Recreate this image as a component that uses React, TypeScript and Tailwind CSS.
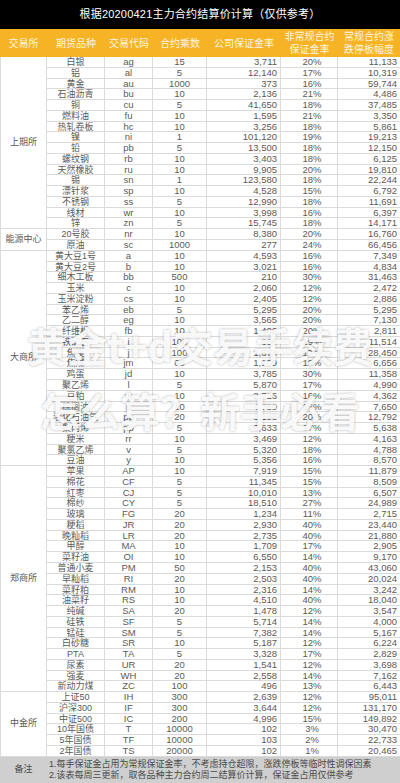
type Row = [string, string, string, string, string, string]

type Group = { name: string; rows: Row[] }

const groups: Group[] = [
  {
    name: "上期所",
    rows: [
      ["白银", "ag", "15", "3,711", "20%", "11,133"],
      ["铝", "al", "5", "12,140", "17%", "10,319"],
      ["黄金", "au", "1000", "373", "16%", "59,744"],
      ["石油沥青", "bu", "10", "2,136", "21%", "4,486"],
      ["铜", "cu", "5", "41,650", "18%", "37,485"],
      ["燃料油", "fu", "10", "1,595", "21%", "3,350"],
      ["热轧卷板", "hc", "10", "3,256", "18%", "5,861"],
      ["镍", "ni", "1", "101,120", "19%", "19,213"],
      ["铅", "pb", "5", "13,500", "18%", "12,150"],
      ["螺纹钢", "rb", "10", "3,403", "18%", "6,125"],
      ["天然橡胶", "ru", "10", "9,905", "20%", "19,810"],
      ["锡", "sn", "1", "123,580", "18%", "22,244"],
      ["漂针浆", "sp", "10", "4,528", "15%", "6,792"],
      ["不锈钢", "ss", "5", "12,990", "18%", "11,691"],
      ["线材", "wr", "10", "3,998", "16%", "6,397"],
      ["锌", "zn", "5", "15,745", "18%", "14,171"],
    ],
  },
  {
    name: "能源中心",
    rows: [
      ["20号胶", "nr", "10", "8,380", "20%", "16,760"],
      ["原油", "sc", "1000", "277", "24%", "66,456"],
    ],
  },
  {
    name: "大商所",
    rows: [
      ["黄大豆1号", "a", "10", "4,593", "16%", "7,349"],
      ["黄大豆2号", "b", "10", "3,021", "16%", "4,834"],
      ["细木工板", "bb", "500", "210", "30%", "31,463"],
      ["玉米", "c", "10", "2,060", "12%", "2,472"],
      ["玉米淀粉", "cs", "10", "2,405", "12%", "2,886"],
      ["苯乙烯", "eb", "5", "5,295", "20%", "5,295"],
      ["乙二醇", "eg", "10", "3,565", "20%", "7,130"],
      ["纤维板", "fb", "10", "1,406", "20%", "2,811"],
      ["铁矿石", "i", "100", "606", "19%", "11,514"],
      ["焦炭", "j", "100", "1,674", "17%", "28,450"],
      ["焦煤", "jm", "60", "1,109", "10%", "6,656"],
      ["鸡蛋", "jd", "10", "3,785", "30%", "11,358"],
      ["聚乙烯", "l", "5", "5,870", "17%", "4,990"],
      ["豆粕", "m", "10", "2,726", "16%", "4,362"],
      ["棕榈油", "p", "10", "4,780", "16%", "7,650"],
      ["液化石油气", "pg", "20", "3,198", "20%", "12,792"],
      ["聚丙烯", "pp", "5", "6,633", "17%", "5,638"],
      ["粳米", "rr", "10", "3,469", "12%", "4,163"],
      ["聚氯乙烯", "v", "5", "5,320", "18%", "4,788"],
      ["豆油", "y", "10", "5,356", "16%", "8,570"],
    ],
  },
  {
    name: "郑商所",
    rows: [
      ["苹果", "AP", "10", "7,919", "15%", "11,879"],
      ["棉花", "CF", "5", "11,345", "15%", "8,509"],
      ["红枣", "CJ", "5", "10,010", "13%", "6,507"],
      ["棉纱", "CY", "5", "18,510", "27%", "24,989"],
      ["玻璃", "FG", "20", "1,234", "11%", "2,715"],
      ["粳稻", "JR", "20", "2,930", "40%", "23,440"],
      ["晚籼稻", "LR", "20", "2,735", "40%", "21,880"],
      ["甲醇", "MA", "10", "1,709", "17%", "2,905"],
      ["菜籽油", "OI", "10", "6,550", "14%", "9,170"],
      ["普通小麦", "PM", "50", "2,153", "40%", "43,060"],
      ["早籼稻", "RI", "20", "2,503", "40%", "20,024"],
      ["菜籽粕", "RM", "10", "2,316", "14%", "3,242"],
      ["油菜籽", "RS", "10", "4,510", "40%", "18,040"],
      ["纯碱", "SA", "20", "1,478", "12%", "3,547"],
      ["硅铁", "SF", "5", "5,714", "14%", "4,000"],
      ["锰硅", "SM", "5", "7,382", "14%", "5,167"],
      ["白砂糖", "SR", "10", "5,187", "12%", "6,224"],
      ["PTA", "TA", "5", "3,328", "17%", "2,829"],
      ["尿素", "UR", "20", "1,541", "12%", "3,698"],
      ["强麦", "WH", "20", "2,558", "14%", "7,162"],
      ["新动力煤", "ZC", "100", "496", "13%", "6,443"],
    ],
  },
  {
    name: "中金所",
    rows: [
      ["上证50", "IH", "300", "2,639", "12%", "95,011"],
      ["沪深300", "IF", "300", "3,644", "12%", "131,170"],
      ["中证500", "IC", "200", "4,996", "15%", "149,892"],
      ["10年国债", "T", "10000", "102", "3%", "30,470"],
      ["5年国债", "TF", "10000", "103", "2%", "22,733"],
      ["2年国债", "TS", "20000", "102", "1%", "20,465"],
    ],
  },
]

const cols = "grid grid-cols-[58px_48px_54px_74px_57px_62px]"

function DataRow({ row }: { row: Row }) {
  const [name, code, mult, margin, pct, limit] = row
  return (
    <div className={`${cols} h-[10.78px] border-b border-[#dadada] text-[9.5px] leading-[10px] text-[#5a5a5a]`}>
      <div className="flex items-center justify-center border-r border-[#dadada] text-[9px]">{name}</div>
      <div className="flex items-center justify-center border-r border-[#dadada]">{code}</div>
      <div className="flex items-center justify-center border-r border-[#dadada]">{mult}</div>
      <div className="flex items-center justify-end border-r border-[#dadada] pr-[3px]">{margin}</div>
      <div className="flex items-center justify-center border-r border-[#dadada] pl-[6px]">{pct}</div>
      <div className="flex items-center justify-end pr-[3px]">{limit}</div>
    </div>
  )
}

export default function App() {
  return (
    <div className="relative w-[400px] h-[783px] overflow-hidden bg-white font-['Liberation_Sans','Noto_Sans_CJK_SC',sans-serif]">
      {/* title */}
      <div className="h-[29px] bg-black flex items-center justify-center text-white text-[11px] tracking-[0.2px]">
        根据20200421主力合约结算价计算（仅供参考）
      </div>

      {/* header */}
      <div className="flex h-[28px] bg-[#f5b325] text-[#fff6df] text-[10px] leading-[13px]">
        <div className="w-[47px] flex items-center justify-center">交易所</div>
        <div className={`${cols} flex-1`}>
          <div className="flex items-center justify-center">期货品种</div>
          <div className="flex items-center justify-center">交易代码</div>
          <div className="flex items-center justify-center">合约乘数</div>
          <div className="flex items-center justify-center">公司保证金率</div>
          <div className="flex flex-col items-center justify-center">
            <span>非常规合约</span>
            <span>保证金率</span>
          </div>
          <div className="flex flex-col items-center justify-center">
            <span>常规合约涨</span>
            <span>跌停板幅度</span>
          </div>
        </div>
      </div>

      {/* body */}
      {groups.map((g) => (
        <div key={g.name} className="flex">
          <div className="w-[47px] flex items-center justify-center border-l border-r border-b border-[#dadada] text-[9px] text-[#5a5a5a]">
            {g.name}
          </div>
          <div className="flex-1 flex flex-col">
            {g.rows.map((r) => (
              <DataRow key={r[1] + r[0]} row={r} />
            ))}
          </div>
        </div>
      ))}

      {/* note */}
      <div className="flex h-[26px] bg-[#cfcfcf] text-[#4a4a4a] text-[9px] leading-[11px]">
        <div className="w-[47px] flex items-center justify-center">备注</div>
        <div className="flex-1 flex flex-col justify-center pl-[2px]">
          <span>1.每手保证金占用为常规保证金率，不考虑持仓超限，涨跌停板等临时性调保因素</span>
          <span>2.该表每周三更新，取各品种主力合约周二结算价计算，保证金占用仅供参考</span>
        </div>
      </div>

      {/* watermark */}
      <div className="absolute left-0 right-0 top-[313px] flex flex-col items-center text-white/90 font-bold text-[40px] leading-[65px] font-['Noto_Sans_CJK_SC',sans-serif] [text-shadow:0_0_3px_rgba(0,0,0,0.3)] pointer-events-none">
        <span>黄金t+d交易手续费</span>
        <span>怎么算？新手必看</span>
      </div>
    </div>
  )
}
